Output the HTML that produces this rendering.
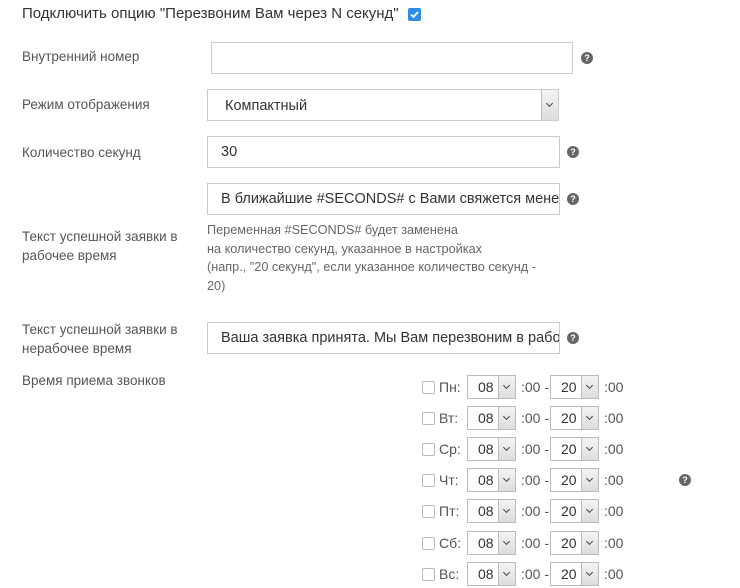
<!DOCTYPE html>
<html><head><meta charset="utf-8"><style>
body{margin:0;width:740px;height:588px;background:#fff;font-family:"Liberation Sans","DejaVu Sans",sans-serif;color:#555;position:relative;overflow:hidden}
.a{position:absolute;white-space:nowrap}
.lb{font-size:13.5px;color:#555}
.in{position:absolute;border:1px solid #ccc;background:#fff;box-sizing:border-box;font-size:14.5px;color:#333;padding-left:13px;line-height:31px;overflow:hidden;white-space:nowrap}
.h{position:absolute;width:12px;height:12px;border-radius:50%;background:#666;color:#fff;font-size:9px;font-weight:bold;text-align:center;line-height:12px}
.sa{position:absolute;top:0;right:0;width:17px;height:100%;background:linear-gradient(#f4f4f4,#ddd);border-left:1px solid #bbb;box-sizing:border-box}
.sa:after{content:"";position:absolute;left:5px;top:calc(50% - 4px);width:4px;height:4px;border-right:1.5px solid #444;border-bottom:1.5px solid #444;transform:rotate(45deg)}
.cb{position:absolute;width:13px;height:13px;border:1px solid #bbb;border-radius:2px;box-sizing:border-box;background:#fff}
.ss{position:absolute;width:49px;height:24px;border:1px solid #bbb;box-sizing:border-box;font-size:14px;color:#333;line-height:23px;padding-left:10px}
.t{font-size:14px;color:#555}
</style></head><body>
<div class="a" style="left:22px;top:5px;font-size:15px;color:#333">Подключить опцию "Перезвоним Вам через N секунд"</div>
<div class="a" style="left:408px;top:8px;width:13px;height:13px;background:#2f8de4;border-radius:2px"><svg width="13" height="13"><path d="M3 6.5 L5.5 9 L10 4" stroke="#fff" stroke-width="1.8" fill="none"/></svg></div>

<div class="a lb" style="left:22px;top:49px">Внутренний номер</div>
<div class="in" style="left:211px;top:42px;width:362px;height:32px"></div>
<div class="h" style="left:581px;top:52px">?</div>

<div class="a lb" style="left:22px;top:97px">Режим отображения</div>
<div class="in" style="left:207px;top:89px;width:352px;height:32px;padding-left:17px;line-height:33px">Компактный<div class="sa"></div></div>

<div class="a lb" style="left:22px;top:145px">Количество секунд</div>
<div class="in" style="left:207px;top:136px;width:353px;height:32px">30</div>
<div class="h" style="left:567px;top:146px">?</div>

<div class="in" style="left:207px;top:183px;width:353px;height:32px">В ближайшие #SECONDS# с Вами свяжется менеджер</div>
<div class="h" style="left:567px;top:193px">?</div>
<div class="a lb" style="left:22px;top:227px;line-height:19px">Текст успешной заявки в<br>рабочее время</div>
<div class="a" style="left:207px;top:221px;line-height:18.7px;color:#666;font-size:12.7px">Переменная #SECONDS# будет заменена<br>на количество секунд, указанное в настройках<br>(напр., "20 секунд", если указанное количество секунд -<br>20)</div>

<div class="a lb" style="left:22px;top:320px;line-height:19px">Текст успешной заявки в<br>нерабочее время</div>
<div class="in" style="left:207px;top:322px;width:353px;height:32px">Ваша заявка принята. Мы Вам перезвоним в рабочее время</div>
<div class="h" style="left:567px;top:332px">?</div>

<div class="a lb" style="left:22px;top:373px">Время приема звонков</div>
<div class="h" style="left:679px;top:474px">?</div>

<div id="days"></div>
<script>
var d=["Пн","Вт","Ср","Чт","Пт","Сб","Вс"],h="";
for(var i=0;i<7;i++){var y=375+i*31.1;
h+='<div class="cb" style="left:422px;top:'+(y+6)+'px"></div>'+
'<div class="a t" style="left:439px;top:'+(y+4)+'px">'+d[i]+':</div>'+
'<div class="ss" style="left:467px;top:'+y+'px">08<div class="sa"></div></div>'+
'<div class="a t" style="left:521px;top:'+(y+4)+'px">:00 -</div>'+
'<div class="ss" style="left:550px;top:'+y+'px">20<div class="sa"></div></div>'+
'<div class="a t" style="left:604px;top:'+(y+4)+'px">:00</div>';}
document.getElementById("days").innerHTML=h;
</script>
</body></html>
